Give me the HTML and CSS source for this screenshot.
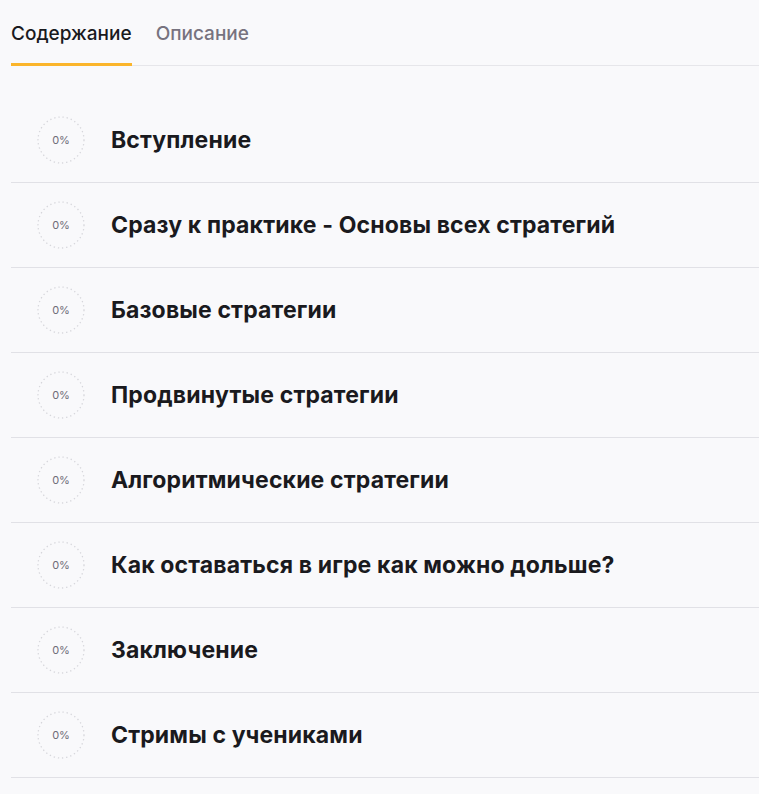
FILE: index.html
```html
<!DOCTYPE html>
<html lang="ru">
<head>
<meta charset="utf-8">
<link rel="stylesheet" href="styles.css">
</head>
<body>
<div class="page">
  <nav class="tabs">
    <div class="tab active">Содержание</div>
    <div class="tab">Описание</div>
  </nav>
  <ul class="lessons">
    <li class="lesson"><span class="progress"><svg viewBox="0 0 48 48"><circle cx="24" cy="24" r="23"/></svg><span class="pct">0%</span></span><span class="title">Вступление</span></li>
    <li class="lesson"><span class="progress"><svg viewBox="0 0 48 48"><circle cx="24" cy="24" r="23"/></svg><span class="pct">0%</span></span><span class="title">Сразу к практике - Основы всех стратегий</span></li>
    <li class="lesson"><span class="progress"><svg viewBox="0 0 48 48"><circle cx="24" cy="24" r="23"/></svg><span class="pct">0%</span></span><span class="title">Базовые стратегии</span></li>
    <li class="lesson"><span class="progress"><svg viewBox="0 0 48 48"><circle cx="24" cy="24" r="23"/></svg><span class="pct">0%</span></span><span class="title">Продвинутые стратегии</span></li>
    <li class="lesson"><span class="progress"><svg viewBox="0 0 48 48"><circle cx="24" cy="24" r="23"/></svg><span class="pct">0%</span></span><span class="title">Алгоритмические стратегии</span></li>
    <li class="lesson"><span class="progress"><svg viewBox="0 0 48 48"><circle cx="24" cy="24" r="23"/></svg><span class="pct">0%</span></span><span class="title">Как оставаться в игре как можно дольше?</span></li>
    <li class="lesson"><span class="progress"><svg viewBox="0 0 48 48"><circle cx="24" cy="24" r="23"/></svg><span class="pct">0%</span></span><span class="title">Заключение</span></li>
    <li class="lesson"><span class="progress"><svg viewBox="0 0 48 48"><circle cx="24" cy="24" r="23"/></svg><span class="pct">0%</span></span><span class="title">Стримы с учениками</span></li>
  </ul>
</div>
</body>
</html>
```
FILE: styles.css
```css
html, body {
  margin: 0;
  padding: 0;
  background: #f9f9fb;
}
body {
  font-family: Inter, "Noto Sans", sans-serif;
  color: #1a1a1e;
  overflow: hidden;
}
.page {
  padding-left: 11px;
}
.tabs {
  display: flex;
  gap: 24px;
  height: 66px;
  box-sizing: border-box;
  border-bottom: 1px solid #e6e6ea;
}
.tab {
  font-size: 19px;
  font-weight: 500;
  color: #77737f;
  padding-top: 22px;
  box-sizing: border-box;
  height: 66px;
  margin-bottom: -1px;
  border-bottom: 3px solid transparent;
}
.tab.active {
  color: #1a1a1e;
  border-bottom-color: #fbb52b;
}
.lessons {
  list-style: none;
  margin: 32px 0 0;
  padding: 0;
}
.lesson {
  display: flex;
  align-items: center;
  height: 85px;
  box-sizing: border-box;
  border-bottom: 1px solid #e1e1e6;
  padding-left: 26px;
  gap: 26px;
}
.progress {
  position: relative;
  width: 48px;
  height: 48px;
  flex: none;
  display: flex;
  align-items: center;
  justify-content: center;
}
.progress svg {
  position: absolute;
  inset: 0;
  width: 48px;
  height: 48px;
}
.progress circle {
  fill: none;
  stroke: #d6d6db;
  stroke-width: 1.3;
  stroke-dasharray: 1.3 2.9;
}
.pct {
  font-size: 11px;
  color: #6f6c78;
  position: relative;
}
.title {
  font-size: 23px;
  font-weight: 700;
  letter-spacing: 0.15px;
}
```
